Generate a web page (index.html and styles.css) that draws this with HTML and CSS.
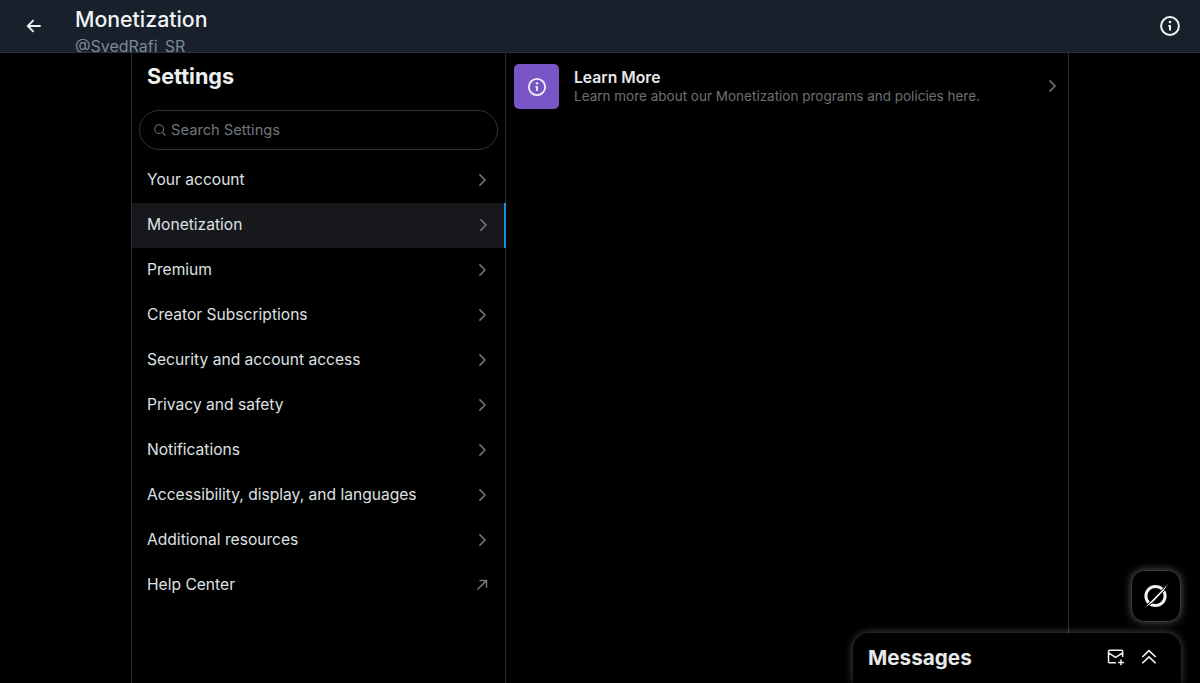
FILE: index.html
```html
<!DOCTYPE html>
<html lang="en">
<head>
    <meta charset="UTF-8">
    <title>Monetization</title>
    <link rel="stylesheet" href="styles.css">
</head>
<body>
    <svg class="icon-defs" width="0" height="0">
        <symbol id="chevron" viewBox="0 0 24 24"><path d="M8.6 4.5 16 12l-7.400 7.500" fill="none" stroke="currentColor" stroke-width="2"/></symbol>
        <symbol id="info" viewBox="0 0 24 24">
            <circle cx="12" cy="12" r="8.900" fill="none" stroke="currentColor" stroke-width="2"/>
            <circle cx="12" cy="8" r="1.300" fill="currentColor"/>
            <path d="M10.300 11h2.700v5.400h-2v-3.700h-.7z" fill="currentColor"/>
        </symbol>
    </svg>

    <header class="topbar">
        <svg class="back-icon" viewBox="0 0 24 24"><path d="M20 12H5M11.500 5 4.500 12l7 7" fill="none" stroke="currentColor" stroke-width="2.200"/></svg>
        <div class="topbar-titles">
            <h1>Monetization</h1>
            <p>@SvedRafi_SR</p>
        </div>
        <svg class="topbar-info"><use href="#info"/></svg>
    </header>

    <main class="layout">
        <section class="settings">
            <h2>Settings</h2>
            <div class="search">
                <svg class="search-icon" viewBox="0 0 24 24"><circle cx="10.500" cy="10.500" r="7.500" fill="none" stroke="currentColor" stroke-width="1.800"/><path d="m16 16 5.500 5.500" stroke="currentColor" stroke-width="1.800"/></svg>
                <span>Search Settings</span>
            </div>
            <nav class="menu">
                <a class="menu-item">Your account <svg><use href="#chevron"/></svg></a>
                <a class="menu-item active">Monetization <svg><use href="#chevron"/></svg></a>
                <a class="menu-item">Premium <svg><use href="#chevron"/></svg></a>
                <a class="menu-item">Creator Subscriptions <svg><use href="#chevron"/></svg></a>
                <a class="menu-item">Security and account access <svg><use href="#chevron"/></svg></a>
                <a class="menu-item">Privacy and safety <svg><use href="#chevron"/></svg></a>
                <a class="menu-item">Notifications <svg><use href="#chevron"/></svg></a>
                <a class="menu-item">Accessibility, display, and languages <svg><use href="#chevron"/></svg></a>
                <a class="menu-item">Additional resources <svg><use href="#chevron"/></svg></a>
                <a class="menu-item">Help Center <svg viewBox="0 0 24 24"><path d="M6 18 17.500 6.500M8.500 6h9.500v9.500" fill="none" stroke="currentColor" stroke-width="2"/></svg></a>
            </nav>
        </section>

        <section class="detail">
            <a class="detail-row">
                <span class="detail-badge"><svg><use href="#info"/></svg></span>
                <span class="detail-text">
                    <strong>Learn More</strong>
                    <span>Learn more about our Monetization programs and policies here.</span>
                </span>
                <svg class="detail-chevron"><use href="#chevron"/></svg>
            </a>
        </section>
    </main>

    <button class="grok-btn">
        <svg viewBox="0 0 32 32">
            <circle cx="15.500" cy="16" r="9.600" fill="none" stroke="currentColor" stroke-width="3"/>
            <path d="M30 1.500 2 30l11-7.500L24 11z" fill="currentColor" stroke="#000" stroke-width="1"/>
        </svg>
    </button>

    <div class="messages">
        <h3>Messages</h3>
        <svg class="msg-icon" viewBox="0 0 24 24"><path d="M12 19H4.500A1.500 1.500 0 0 1 3 17.500v-12A1.500 1.500 0 0 1 4.500 4h14A1.500 1.500 0 0 1 20 5.500V12M3 7l8.500 5.500L20 7M18 15v7M14.500 18.500h7" fill="none" stroke="currentColor" stroke-width="1.800"/></svg>
        <svg class="msg-icon" viewBox="0 0 24 24"><path d="m4 12 8-7.500 8 7.500M4 19.500 12 12l8 7.500" fill="none" stroke="currentColor" stroke-width="2"/></svg>
    </div>
</body>
</html>
```

FILE: styles.css
```css
html, body {
    height: 100%;
}

body {
    margin: 0;
    background: #000;
    color: #e7e9ea;
    font-family: 'Inter', 'Liberation Sans', sans-serif;
    overflow: hidden;
    display: flex;
    flex-direction: column;
}

.icon-defs {
    position: absolute;
}

/* Top bar */
.topbar {
    height: 52px;
    flex: none;
    display: flex;
    align-items: flex-start;
    background: #17202b;
    border-bottom: 1px solid #2b333d;
    overflow: hidden;
    padding: 0 18px 0 24px;
}

.back-icon {
    width: 20px;
    height: 20px;
    margin-top: 16px;
    color: #eff3f4;
}

.topbar-titles {
    margin-left: 31px;
    flex: 1;
}

.topbar h1 {
    margin: 6px 0 0;
    font-size: 21.3px;
    line-height: 26px;
    font-weight: 500;
    color: #f1f3f4;
}

.topbar p {
    margin: 3px 0 0;
    font-size: 16px;
    line-height: 22px;
    color: #7d8995;
}

.topbar-info {
    width: 24px;
    height: 24px;
    margin-top: 14px;
    color: #eff3f4;
}

/* Two column layout */
.layout {
    flex: 1;
    display: flex;
    margin-left: 131px;
    width: 938px;
    border-left: 1px solid #2a2d30;
    border-right: 1px solid #2a2d30;
    box-sizing: border-box;
}

.settings {
    width: 373px;
    flex: none;
    border-right: 1px solid #2a2d30;
}

.settings h2 {
    margin: 9px 0 0 15px;
    font-size: 21.6px;
    line-height: 28px;
    font-weight: 700;
    color: #eceef0;
}

.search {
    height: 40px;
    box-sizing: border-box;
    margin: 20px 7px 8px;
    border: 1px solid #2f3336;
    border-radius: 20px;
    display: flex;
    align-items: center;
    gap: 4px;
    padding-left: 13px;
    font-size: 14.7px;
    color: #6f767c;
}

.search-icon {
    width: 14px;
    height: 14px;
}

.menu-item {
    height: 45px;
    box-sizing: border-box;
    display: flex;
    align-items: center;
    justify-content: space-between;
    padding: 0 14px 2px 15px;
    font-size: 15.6px;
    color: #dfe1e3;
}

.menu-item svg {
    width: 18px;
    height: 18px;
    color: #71767b;
}

.menu-item.active {
    background: #16181c;
    border-right: 2px solid #1d8fe0;
    padding-right: 12px;
    margin-right: -1px;
}

.detail {
    flex: 1;
    padding: 11px 8px;
}

.detail-row {
    display: flex;
    align-items: center;
}

.detail-badge {
    width: 45px;
    height: 45px;
    border-radius: 5px;
    background: #7856c5;
    display: flex;
    align-items: center;
    justify-content: center;
    color: #f0ecf9;
}

.detail-badge svg {
    width: 22px;
    height: 22px;
}

.detail-text {
    flex: 1;
    margin-left: 15px;
    display: flex;
    flex-direction: column;
    font-size: 13.5px;
    line-height: 18px;
    color: #6b7075;
    margin-top: -1px;
}

.detail-text strong {
    font-size: 15.7px;
    line-height: 19px;
    font-weight: 600;
    color: #e7e9ea;
}

.detail-chevron {
    width: 18px;
    height: 18px;
    color: #71767b;
    margin-right: -1px;
    margin-top: -2px;
}

/* Floating things */
.grok-btn {
    position: absolute;
    left: 1131px;
    top: 570px;
    width: 50px;
    height: 52px;
    padding: 0;
    background: #000;
    border: 1px solid #3a3d40;
    border-radius: 13px;
    box-shadow: 0 0 9px rgba(255, 255, 255, 0.32);
    color: #f4f4f4;
    display: flex;
    align-items: center;
    justify-content: center;
}

.grok-btn svg {
    width: 32px;
    height: 32px;
}

.messages {
    position: absolute;
    left: 853px;
    top: 633px;
    width: 328px;
    height: 50px;
    box-sizing: border-box;
    background: #000;
    border-radius: 16px 16px 0 0;
    box-shadow: 0 0 8px rgba(255, 255, 255, 0.3);
    display: flex;
    align-items: center;
    gap: 13px;
    padding: 0 22px 2px 15px;
}

.messages h3 {
    flex: 1;
    margin: 0;
    font-size: 20.700px;
    font-weight: 700;
    color: #e7e9ea;
}

.msg-icon {
    width: 20px;
    height: 20px;
    color: #eff3f4;
}
```
